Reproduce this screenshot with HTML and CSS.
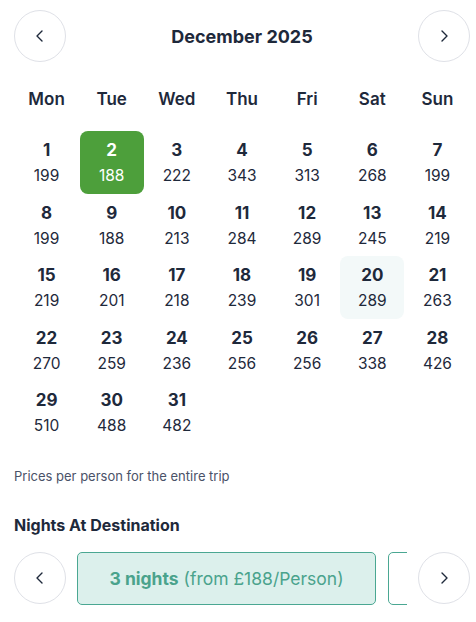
FILE: index.html
```html
<!DOCTYPE html>
<html lang="en">
<head>
    <meta charset="UTF-8">
    <meta name="viewport" content="width=device-width, initial-scale=1.0">
    <title>Choose Dates</title>
    <link rel="stylesheet" href="styles.css">
</head>
<body>
    <div class="picker">
        <!-- Month header -->
        <div class="month-bar">
            <button class="round-btn" aria-label="Previous month">
                <svg width="16" height="16" viewBox="0 0 16 16"><path d="M10 3 L5 8 L10 13" /></svg>
            </button>
            <h2 class="month-title">December 2025</h2>
            <button class="round-btn" aria-label="Next month">
                <svg width="16" height="16" viewBox="0 0 16 16"><path d="M6 3 L11 8 L6 13" /></svg>
            </button>
        </div>

        <!-- Calendar grid -->
        <div class="weekdays">
            <span>Mon</span><span>Tue</span><span>Wed</span><span>Thu</span><span>Fri</span><span>Sat</span><span>Sun</span>
        </div>
        <div class="days">
            <div class="day"><b>1</b><span>199</span></div>
            <div class="day selected"><b>2</b><span>188</span></div>
            <div class="day"><b>3</b><span>222</span></div>
            <div class="day"><b>4</b><span>343</span></div>
            <div class="day"><b>5</b><span>313</span></div>
            <div class="day"><b>6</b><span>268</span></div>
            <div class="day"><b>7</b><span>199</span></div>

            <div class="day"><b>8</b><span>199</span></div>
            <div class="day"><b>9</b><span>188</span></div>
            <div class="day"><b>10</b><span>213</span></div>
            <div class="day"><b>11</b><span>284</span></div>
            <div class="day"><b>12</b><span>289</span></div>
            <div class="day"><b>13</b><span>245</span></div>
            <div class="day"><b>14</b><span>219</span></div>

            <div class="day"><b>15</b><span>219</span></div>
            <div class="day"><b>16</b><span>201</span></div>
            <div class="day"><b>17</b><span>218</span></div>
            <div class="day"><b>18</b><span>239</span></div>
            <div class="day"><b>19</b><span>301</span></div>
            <div class="day hovered"><b>20</b><span>289</span></div>
            <div class="day"><b>21</b><span>263</span></div>

            <div class="day"><b>22</b><span>270</span></div>
            <div class="day"><b>23</b><span>259</span></div>
            <div class="day"><b>24</b><span>236</span></div>
            <div class="day"><b>25</b><span>256</span></div>
            <div class="day"><b>26</b><span>256</span></div>
            <div class="day"><b>27</b><span>338</span></div>
            <div class="day"><b>28</b><span>426</span></div>

            <div class="day"><b>29</b><span>510</span></div>
            <div class="day"><b>30</b><span>488</span></div>
            <div class="day"><b>31</b><span>482</span></div>
        </div>

        <p class="note">Prices per person for the entire trip</p>

        <!-- Nights selector -->
        <h3 class="section-title">Nights At Destination</h3>
        <div class="nights-bar">
            <button class="round-btn" aria-label="Previous">
                <svg width="16" height="16" viewBox="0 0 16 16"><path d="M10 3 L5 8 L10 13" /></svg>
            </button>
            <div class="nights-track">
                <div class="night-card active"><b>3 nights</b>&nbsp;(from £188/Person)</div>
                <!-- next option, scrolled out of view -->
                <div class="night-card"></div>
            </div>
            <button class="round-btn" aria-label="Next">
                <svg width="16" height="16" viewBox="0 0 16 16"><path d="M6 3 L11 8 L6 13" /></svg>
            </button>
        </div>
    </div>
</body>
</html>
```

FILE: styles.css
```css
body {
    margin: 0;
    background-color: white;
    font-family: Inter, "Open Sans", sans-serif;
    color: #1e293b;
}

.picker {
    width: 456px;
    padding: 10px 6px 0 14px;
}

.month-bar {
    display: flex;
    justify-content: space-between;
    align-items: center;
}

.month-title {
    margin: 0;
    font-size: 18px;
    font-weight: 700;
}

.round-btn {
    width: 52px;
    height: 52px;
    flex-shrink: 0;
    border-radius: 50%;
    border: 1px solid #dfe1e7;
    background-color: white;
    padding: 0;
    display: flex;
    justify-content: center;
    align-items: center;
    cursor: pointer;
}

.round-btn path {
    fill: none;
    stroke: #1e293b;
    stroke-width: 1.4;
    stroke-linecap: round;
    stroke-linejoin: round;
}

.weekdays {
    display: grid;
    grid-template-columns: repeat(7, 1fr);
    margin-top: 26px;
    text-align: center;
    font-size: 17px;
    font-weight: 600;
    line-height: 22px;
}

.days {
    display: grid;
    grid-template-columns: repeat(7, 1fr);
    grid-auto-rows: 62.5px;
    margin-top: 21px;
}

.day {
    display: flex;
    flex-direction: column;
    align-items: center;
    padding-top: 8px;
    border-radius: 8px;
    margin: 0 0.5px;
}

.day b {
    font-size: 17px;
    font-weight: 700;
    line-height: 22px;
}

.day span {
    margin-top: 4px;
    font-size: 15.5px;
    line-height: 22px;
}

.day.selected {
    background-color: #4d9f3b;
    color: white;
}

.day.hovered {
    background-color: #f3f9f9;
}

.note {
    margin: 24px 0 0;
    font-size: 13px;
    color: #4a5268;
}

.section-title {
    margin: 31px 0 0;
    font-size: 16px;
    font-weight: 700;
}

.nights-bar {
    display: flex;
    align-items: center;
    gap: 11px;
    margin-top: 17px;
}

.nights-track {
    flex: 1;
    display: flex;
    gap: 12px;
    overflow: hidden;
}

.night-card {
    flex: 0 0 299px;
    box-sizing: border-box;
    height: 53px;
    display: flex;
    justify-content: center;
    align-items: center;
    border: 1px solid #4aa792;
    border-radius: 5px;
    background-color: white;
    color: #4aa38c;
    font-size: 17.5px;
    white-space: nowrap;
}

.night-card.active {
    background-color: #dcf0ec;
}
```
